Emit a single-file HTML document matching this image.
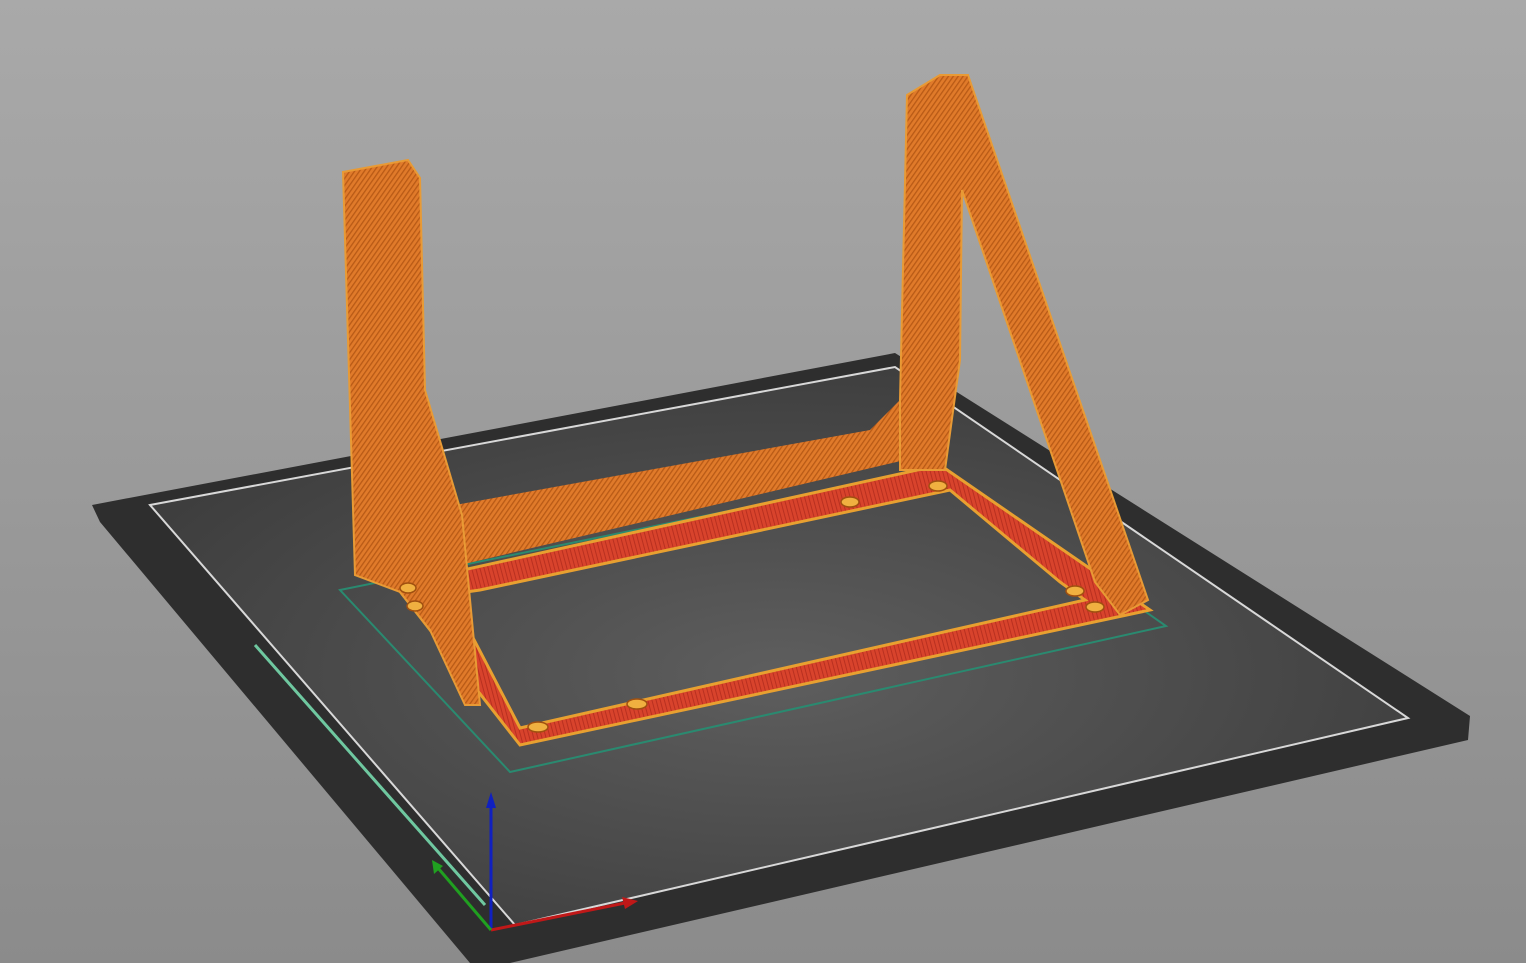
<!DOCTYPE html>
<html><head><meta charset="utf-8"><style>
html,body{margin:0;padding:0;width:1526px;height:963px;overflow:hidden;background:#999}
svg{display:block}
</style></head><body>
<svg width="1526" height="963" viewBox="0 0 1526 963" xmlns="http://www.w3.org/2000/svg">
<defs>
<linearGradient id="bg" x1="0" y1="0" x2="0" y2="1">
<stop offset="0" stop-color="#a9a9a9"/><stop offset="1" stop-color="#8b8b8b"/>
</linearGradient>
<radialGradient id="bed" cx="0.5" cy="0.55" r="0.6">
<stop offset="0" stop-color="#5e5e5e"/><stop offset="1" stop-color="#3c3c3c"/>
</radialGradient>
<pattern id="hatch" width="4" height="4" patternUnits="userSpaceOnUse" patternTransform="rotate(35)">
<rect width="4" height="4" fill="#e07a2a"/><rect width="1.3" height="4" fill="#b85a16"/>
</pattern>
<pattern id="redh" width="4" height="4" patternUnits="userSpaceOnUse" patternTransform="rotate(-15)">
<rect width="4" height="4" fill="#d8432c"/><rect width="1" height="4" fill="#b83020"/>
</pattern>
</defs>
<rect width="1526" height="963" fill="url(#bg)"/>
<!-- bed -->
<polygon points="92,505 895,353 1470,716 1468,740 510,963 470,963 100,522" fill="#2e2e2e"/>
<polygon points="150,505 895,367 1408,718 515,925" fill="url(#bed)" stroke="#d8d8d8" stroke-width="2"/>
<line x1="255" y1="645" x2="485" y2="905" stroke="#6fc8a0" stroke-width="3"/>
<!-- skirt outline -->
<polygon points="340,590 940,468 1166,626 510,772" fill="none" stroke="#2a8a70" stroke-width="2"/>
<!-- back bar -->
<polygon points="455,505 870,430 900,400 905,460 460,565" fill="url(#hatch)"/>
<!-- base frame -->
<path d="M395,585 L940,465 L1150,610 L520,745 Z M445,595 L470,632 L520,728 L1085,600 L1060,582 L950,490 L480,590 Z" fill="url(#redh)" fill-rule="evenodd" stroke="#e8a030" stroke-width="3"/>
<!-- left upright -->
<polygon points="343,172 408,160 420,178 425,390 462,515 480,705 465,705 430,630 400,592 355,575" fill="url(#hatch)" stroke="#e89a35" stroke-width="2"/>
<!-- right upright -->
<polygon points="907,95 940,75 968,75 1148,600 1120,615 1095,582 962,190 960,360 945,470 900,470 900,400" fill="url(#hatch)" stroke="#e89a35" stroke-width="2"/>
<!-- holes -->
<g fill="#f0b040" stroke="#a05010" stroke-width="1.5">
<ellipse cx="538" cy="727" rx="10" ry="5"/><ellipse cx="637" cy="704" rx="10" ry="5"/>
<ellipse cx="1075" cy="591" rx="9" ry="5"/><ellipse cx="1095" cy="607" rx="9" ry="5"/>
<ellipse cx="850" cy="502" rx="9" ry="5"/><ellipse cx="938" cy="486" rx="9" ry="5"/>
<ellipse cx="408" cy="588" rx="8" ry="5"/><ellipse cx="415" cy="606" rx="8" ry="5"/>
</g>
<!-- axes -->
<line x1="491" y1="930" x2="491" y2="805" stroke="#1020c0" stroke-width="3"/>
<polygon points="486,808 496,808 491,792" fill="#1020c0"/>
<line x1="491" y1="930" x2="625" y2="903" stroke="#c01818" stroke-width="3"/>
<polygon points="622,897 625,909 638,901" fill="#c01818"/>
<line x1="491" y1="930" x2="438" y2="868" stroke="#20a020" stroke-width="3"/>
<polygon points="434,874 443,866 432,860" fill="#20a020"/>
</svg>
</body></html>
